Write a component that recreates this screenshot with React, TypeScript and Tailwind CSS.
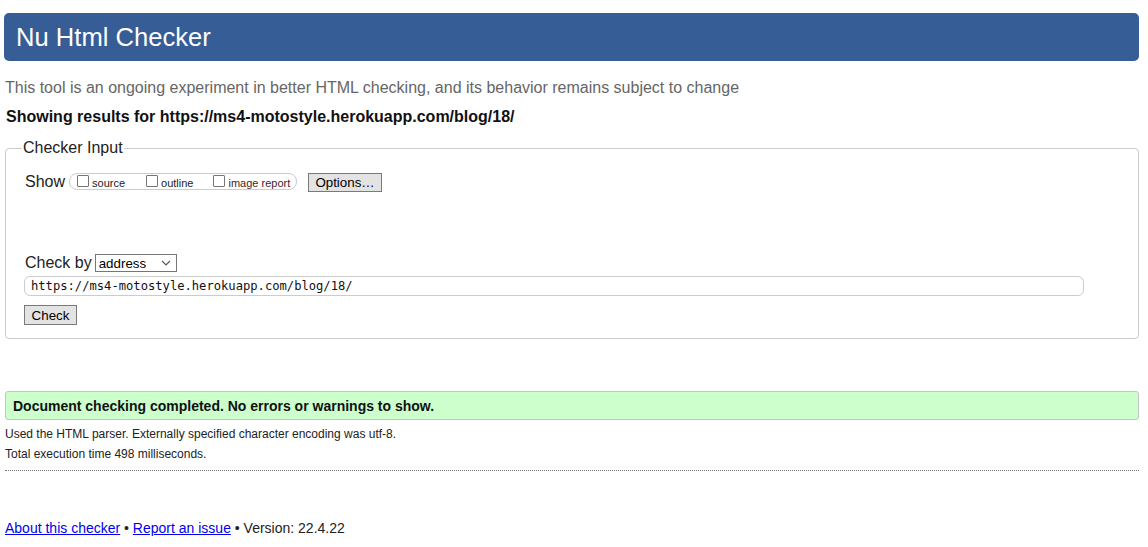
import React from "react";

function Box({ label, className = "" }: { label: string; className?: string }) {
  return (
    <span className="flex items-start">
      <span className="mt-[1px] w-[12px] h-[12px] border border-[#767676] bg-white rounded-[1px]" />
      <span className={`ml-[3px] mt-[3px] text-[11px] leading-[13px] ${className}`}>{label}</span>
    </span>
  );
}

export default function App() {
  return (
    <div className="w-[1148px] h-[547px] bg-white pl-[4px] pr-[9px] pt-[13px] font-['Liberation_Sans',Arial,sans-serif] text-black overflow-hidden">
      <div className="h-[48px] rounded-[5px] bg-[#365d95] flex items-center pl-[12px] text-white text-[25.6px] leading-[30px]">
        Nu Html Checker
      </div>
      <p className="mt-[18px] ml-[1px] text-[16px] leading-[18px] text-[#666]">
        This tool is an ongoing experiment in better HTML checking, and its behavior remains subject to change
      </p>
      <p className="mt-[11px] ml-[2px] font-bold text-[16px] leading-[18px] text-[#111]">
        Showing results for https://ms4-motostyle.herokuapp.com/blog/18/
      </p>
      <fieldset className="mt-[13px] ml-[1px] border border-[#cccccc] rounded-[4px] pl-[19px] pr-[19px] pt-[15px] pb-[13px]">
        <legend className="-ml-[3px] px-[1px] text-[16px] leading-[18px] text-[#222]">Checker Input</legend>
        <div className="flex items-start h-[20px]">
          <span className="mt-[1px] text-[16px] leading-[18px] text-[#222]">Show</span>
          <div className="ml-[4px] mt-[1px] h-[17px] w-[228px] border border-[#cccccc] rounded-[8px] flex items-start pl-[7px] text-[#222]">
            <Box label="source" />
            <span className="w-[21px]" />
            <Box label="outline" />
            <span className="w-[20px]" />
            <Box label="image report" className="text-[#4a1c28]" />
          </div>
          <button className="ml-[11px] mt-[1px] h-[19px] w-[74px] bg-[#e3e3e3] border border-[#7a7a7a] text-[13.33px] leading-[15px] text-black flex items-center justify-center">
            Options…
          </button>
        </div>
        <div className="mt-[61px] flex items-start h-[19px]">
          <span className="mt-[1px] text-[16px] leading-[18px] text-[#222]">Check by</span>
          <div className="ml-[3px] mt-[1px] h-[18px] w-[82px] border border-[#767676] bg-white flex items-center pl-[3px] pr-[4px] justify-between">
            <span className="text-[13.33px] leading-[15px] text-black">address</span>
            <svg width="10" height="6" viewBox="0 0 10 6" className="mr-[1px]">
              <polyline points="1,1 5,5 9,1" fill="none" stroke="#555" strokeWidth="1.1" />
            </svg>
          </div>
        </div>
        <div className="mt-[4px] -ml-[1px] h-[20px] w-[1060px] border border-[#cccccc] rounded-[6px] flex items-center pl-[6px]">
          <span className="font-['DejaVu_Sans_Mono',monospace] text-[12.15px] leading-[14px] text-[#111]">
            https://ms4-motostyle.herokuapp.com/blog/18/
          </span>
        </div>
        <button className="mt-[9px] -ml-[1px] h-[20px] w-[53px] bg-[#e3e3e3] border border-[#7a7a7a] text-[13.33px] leading-[15px] text-black flex items-center justify-center">
          Check
        </button>
      </fieldset>
      <div className="mt-[52px] ml-[1px] h-[29px] border border-[#c4c4c4] rounded-[3px] bg-[#ccffcc] flex items-center pl-[7px]">
        <span className="font-bold text-[14px] leading-[16px] text-[#111]">
          Document checking completed. No errors or warnings to show.
        </span>
      </div>
      <p className="mt-[7px] ml-[1px] text-[12px] leading-[14px] text-[#222]">
        Used the HTML parser. Externally specified character encoding was utf-8.
      </p>
      <p className="mt-[6px] ml-[1px] text-[12px] leading-[14px] text-[#222]">
        Total execution time 498 milliseconds.
      </p>
      <div className="mt-[9px] ml-[1px] h-0 border-t border-dotted border-[#777]" />
      <p className="mt-[49px] ml-[1px] text-[14px] leading-[16px] text-[#222]">
        <a href="#" className="text-[#0000ee] underline">About this checker</a>
        {" • "}
        <a href="#" className="text-[#0000ee] underline">Report an issue</a>
        {" • Version: 22.4.22"}
      </p>
    </div>
  );
}
